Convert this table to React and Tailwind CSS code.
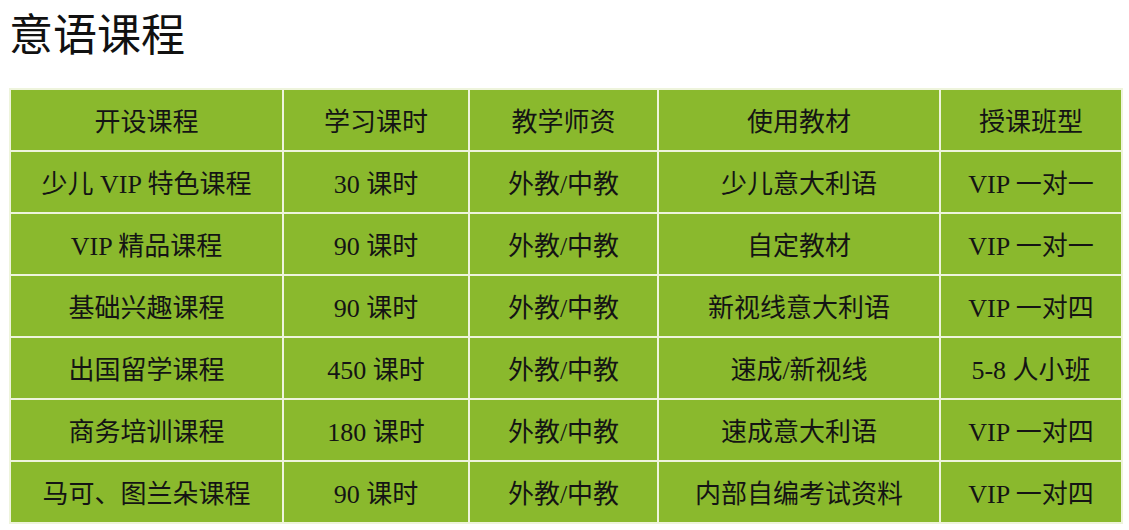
// Italian course table: a heading and a green grid of offerings.

const COLUMNS = [
  { label: '开设课程', width: 'w-[273px]' },
  { label: '学习课时', width: 'w-[186px]' },
  { label: '教学师资', width: 'w-[189px]' },
  { label: '使用教材', width: 'w-[282px]' },
  { label: '授课班型', width: 'w-[182px]' },
];

const ROWS = [
  ['少儿 VIP 特色课程', '30 课时', '外教/中教', '少儿意大利语', 'VIP 一对一'],
  ['VIP 精品课程', '90 课时', '外教/中教', '自定教材', 'VIP 一对一'],
  ['基础兴趣课程', '90 课时', '外教/中教', '新视线意大利语', 'VIP 一对四'],
  ['出国留学课程', '450 课时', '外教/中教', '速成/新视线', '5-8 人小班'],
  ['商务培训课程', '180 课时', '外教/中教', '速成意大利语', 'VIP 一对四'],
  ['马可、图兰朵课程', '90 课时', '外教/中教', '内部自编考试资料', 'VIP 一对四'],
];

const cellCls =
  'h-[62px] pt-[5px] border-2 border-[#eef4dc] text-center align-middle text-[26px] font-normal text-[#141414] leading-none';

export default function App() {
  return (
    <div className="w-[1129px] h-[530px] bg-white overflow-hidden pl-[9px]">
      <h1 className="h-[64px] text-[44px] leading-[64px] font-normal text-[#111] font-['Noto_Sans_CJK_SC',sans-serif]">
        意语课程
      </h1>

      <table className="mt-[24px] table-fixed border-collapse bg-[#8ab92d] font-['Liberation_Serif','Noto_Sans_CJK_SC',serif]">
        <thead>
          <tr>
            {COLUMNS.map((c) => (
              <th key={c.label} className={`${cellCls} ${c.width}`}>
                {c.label}
              </th>
            ))}
          </tr>
        </thead>
        <tbody>
          {ROWS.map((row, i) => (
            <tr key={i}>
              {row.map((text, j) => (
                <td key={j} className={cellCls}>
                  {text}
                </td>
              ))}
            </tr>
          ))}
        </tbody>
      </table>
    </div>
  );
}
